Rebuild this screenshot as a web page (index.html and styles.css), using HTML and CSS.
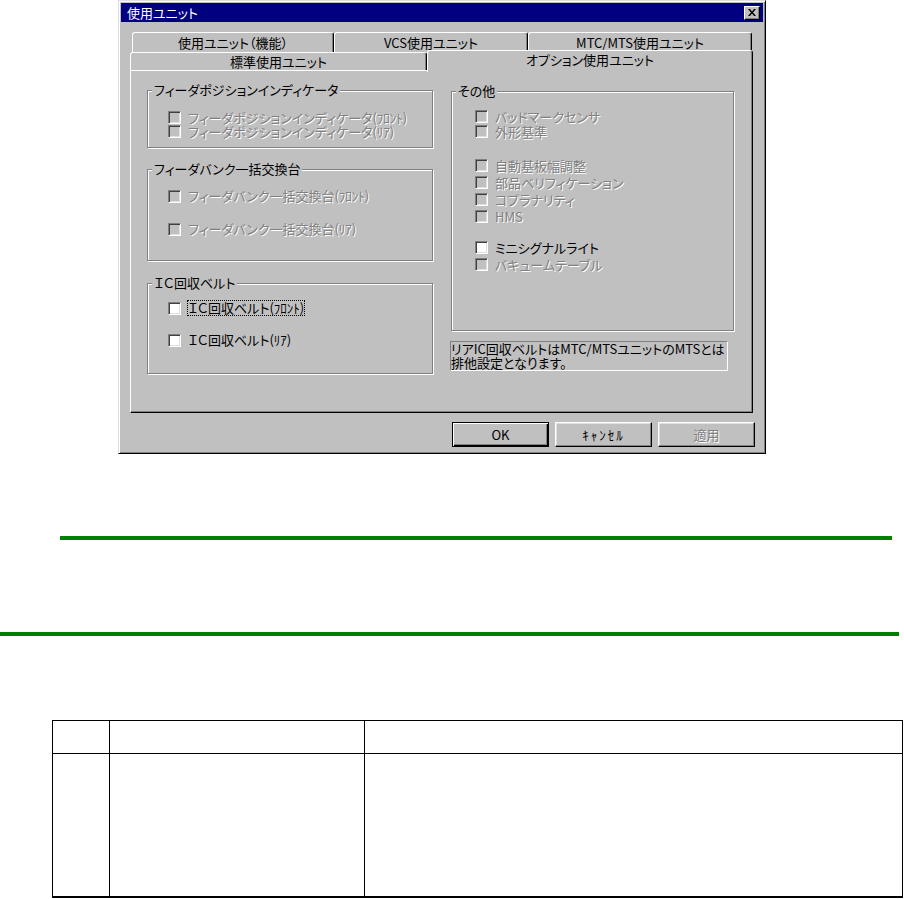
FILE: index.html
```html
<!DOCTYPE html>
<html lang="ja">
<head>
    <meta charset="UTF-8">
    <title>使用ユニット</title>
    <link rel="stylesheet" href="styles.css">
</head>
<body>
    <div class="dialog">
        <div class="titlebar">
            <span class="title">使用ユニット</span>
            <span class="close">
                <svg width="8" height="7" viewBox="0 0 8 7"><path d="M0 0h2l2 2.5L6 0h2L5 3.5 8 7H6L4 4.5 2 7H0l3-3.5z" fill="#000"/></svg>
            </span>
        </div>

        <div class="tabs">
            <div class="tab-row back">
                <div class="tab t-func">使用ユニット（機能）</div>
                <div class="tab t-vcs">VCS使用ユニット</div>
                <div class="tab t-mtc">MTC/MTS使用ユニット</div>
            </div>
            <div class="tab-row front">
                <div class="tab t-std">標準使用ユニット</div>
                <div class="tab t-opt selected">オプション使用ユニット</div>
            </div>
        </div>

        <div class="panel">
            <div class="col">
                <div class="group g-pos">
                    <div class="group-title">フィーダポジションインディケータ</div>
                    <div class="opts">
                        <div class="opt disabled"><span class="cb"></span>フィーダポジションインディケータ(ﾌﾛﾝﾄ)</div>
                        <div class="opt disabled"><span class="cb"></span>フィーダポジションインディケータ(ﾘｱ)</div>
                    </div>
                </div>
                <div class="group g-bank">
                    <div class="group-title">フィーダバンク一括交換台</div>
                    <div class="opts">
                        <div class="opt disabled"><span class="cb"></span>フィーダバンク一括交換台(ﾌﾛﾝﾄ)</div>
                        <div class="opt disabled"><span class="cb"></span>フィーダバンク一括交換台(ﾘｱ)</div>
                    </div>
                </div>
                <div class="group g-belt">
                    <div class="group-title">ＩＣ回収ベルト</div>
                    <div class="opts">
                        <div class="opt"><span class="cb"></span><span class="focus">ＩＣ回収ベルト(ﾌﾛﾝﾄ)</span></div>
                        <div class="opt"><span class="cb"></span>ＩＣ回収ベルト(ﾘｱ)</div>
                    </div>
                </div>
            </div>

            <div class="col">
                <div class="group g-other">
                    <div class="group-title">その他</div>
                    <div class="opts o-first">
                        <div class="opt disabled"><span class="cb"></span>バッドマークセンサ</div>
                        <div class="opt disabled"><span class="cb"></span>外形基準</div>
                    </div>
                    <div class="opts o-mid">
                        <div class="opt disabled"><span class="cb"></span>自動基板幅調整</div>
                        <div class="opt disabled"><span class="cb"></span>部品ベリフィケーション</div>
                        <div class="opt disabled"><span class="cb"></span>コプラナリティ</div>
                        <div class="opt disabled"><span class="cb"></span>HMS</div>
                    </div>
                    <div class="opts o-last">
                        <div class="opt"><span class="cb"></span>ミニシグナルライト</div>
                        <div class="opt disabled"><span class="cb"></span>バキュームテーブル</div>
                    </div>
                </div>
                <div class="note">リアIC回収ベルトはMTC/MTSユニットのMTSとは<br>排他設定となります。</div>
            </div>
        </div>

        <div class="buttons">
            <button class="btn default">OK</button>
            <button class="btn btn-cancel">ｷｬﾝｾﾙ</button>
            <button class="btn" disabled>適用</button>
        </div>
    </div>

    <div class="rule rule-short"></div>
    <div class="rule rule-long"></div>

    <table class="grid">
        <tr class="head">
            <td class="c-no"></td>
            <td class="c-item"></td>
            <td class="c-desc"></td>
        </tr>
        <tr class="body">
            <td></td>
            <td></td>
            <td></td>
        </tr>
    </table>
</body>
</html>
```

FILE: styles.css
```css
body {
    margin: 0;
    background: #fff;
    color: #000;
    font-family: "Noto Sans CJK JP", "Liberation Sans", sans-serif;
    font-size: 13px;
    font-feature-settings: "palt";
}

/* dialog frame */
.dialog {
    box-sizing: border-box;
    width: 648px;
    height: 454px;
    margin-left: 118px;
    padding: 2px;
    background: #c0c0c0;
    border: 1px solid;
    border-color: #dfdfdf #000 #000 #dfdfdf;
    box-shadow: inset 1px 1px 0 #fff, inset -1px -1px 0 #808080;
}
.titlebar {
    display: flex;
    align-items: center;
    height: 19px;
    padding: 0 3px 0 6px;
    background: #000080;
    color: #fff;
    line-height: 19px;
}
.close {
    display: flex;
    align-items: center;
    justify-content: center;
    box-sizing: border-box;
    width: 16px;
    height: 14px;
    margin-left: auto;
    background: #c0c0c0;
    border: 1px solid;
    border-color: #fff #000 #000 #fff;
    box-shadow: inset -1px -1px 0 #808080;
}

/* tabs */
.tabs {
    width: 623px;
    margin: 10px 0 0 9px;
}
.tab-row {
    display: flex;
    align-items: flex-start;
}
.tab-row.back {
    height: 20px;
    padding-left: 2px;
}
.tab-row.front {
    height: 18px;
}
.tab {
    box-sizing: border-box;
    background: #c0c0c0;
    border: 1px solid;
    border-bottom: 0;
    border-color: #fff #000 #000 #fff;
    border-radius: 3px 3px 0 0;
    box-shadow: inset -1px 0 0 #808080;
    text-align: center;
    line-height: 19px;
}
.back .tab {
    height: 20px;
}
.front .tab {
    height: 18px;
    line-height: 16px;
    padding-top: 1px;
}
.t-func { width: 202px; }
.t-vcs { width: 194px; }
.t-mtc { width: 224px; }
.t-std { width: 297px; }
.t-opt { width: 326px; }
.front .tab.selected {
    position: relative;
    height: 22px;
    margin-top: -2px;
    padding-top: 0;
    line-height: 17px;
}

/* tab panel */
.panel {
    box-sizing: border-box;
    display: grid;
    grid-template-columns: 286px 283px;
    column-gap: 18px;
    align-items: start;
    width: 623px;
    height: 343px;
    margin-left: 9px;
    padding-left: 16px;
    border: 1px solid;
    border-color: #fff #000 #000 #fff;
    box-shadow: inset -1px -1px 0 #808080;
}

.group {
    box-sizing: border-box;
    border: 1px solid #808080;
    box-shadow: inset 1px 1px 0 #fff, 1px 1px 0 #fff;
}
.group-title {
    width: fit-content;
    margin: -8px 0 0 4px;
    padding: 0 2px;
    background: #c0c0c0;
    line-height: 14px;
}
.opts {
    display: flex;
    flex-direction: column;
    padding-left: 20px;
}
.opt {
    display: flex;
    align-items: center;
    gap: 7px;
    height: 16px;
    line-height: 14px;
    white-space: nowrap;
}
.cb {
    box-sizing: border-box;
    flex: none;
    width: 13px;
    height: 13px;
    background: #fff;
    border: 1px solid;
    border-color: #808080 #fff #fff #808080;
    box-shadow: inset 1px 1px 0 #404040, inset -1px -1px 0 #dfdfdf;
}
.opt.disabled {
    color: #808080;
    text-shadow: 1px 1px 0 #fff;
}
.opt.disabled .cb {
    background: #c0c0c0;
}
.focus {
    outline: 1px dotted #000;
}

.g-pos {
    height: 58px;
    margin-top: 19px;
}
.g-pos .opts {
    padding-top: 13px;
}
.g-pos .opt {
    height: 14px;
    line-height: 13px;
}
.g-bank {
    height: 92px;
    margin-top: 21px;
}
.g-bank .opts {
    padding-top: 12px;
    gap: 17px;
}
.g-belt {
    height: 91px;
    margin-top: 22px;
}
.g-belt .opts {
    padding-top: 10px;
    gap: 16px;
}

.g-other {
    height: 240px;
    margin-top: 20px;
}
.g-other .opts {
    padding-left: 23px;
}
.o-first {
    padding-top: 11px;
}
.o-first .opt {
    height: 15px;
}
.o-mid {
    margin-top: 18px;
}
.o-mid .opt,
.o-last .opt {
    height: 17px;
}
.o-last {
    margin-top: 14px;
}

.note {
    box-sizing: border-box;
    width: 278px;
    height: 30px;
    margin: 10px 0 0 -1px;
    border: 1px solid;
    border-color: #808080 #fff #fff #808080;
    line-height: 14px;
    white-space: nowrap;
}

/* buttons */
.buttons {
    display: flex;
    justify-content: flex-end;
    gap: 6px;
    margin-top: 9px;
    padding-right: 8px;
}
.btn {
    box-sizing: border-box;
    width: 97px;
    height: 25px;
    padding: 0;
    background: #c0c0c0;
    border: 1px solid;
    border-color: #fff #000 #000 #fff;
    box-shadow: inset -1px -1px 0 #808080, inset 1px 1px 0 #dfdfdf;
    font: inherit;
    color: #000;
}
.btn.default {
    border: 1px solid #000;
    box-shadow: inset 1px 1px 0 #fff, inset -1px -1px 0 #000, inset -2px -2px 0 #808080;
}
.btn-cancel {
    letter-spacing: 2px;
}
.btn:disabled {
    color: #808080;
    text-shadow: 1px 1px 0 #fff;
}

/* page below the screenshot */
.rule {
    height: 4px;
    background: #008000;
}
.rule-short {
    width: 832px;
    margin: 82px 0 0 60px;
}
.rule-long {
    width: 899px;
    margin-top: 92px;
}

.grid {
    width: 851px;
    margin: 84px 0 0 52px;
    border-collapse: collapse;
}
.grid td {
    border: 1px solid #000;
    padding: 0;
}
.grid .head td {
    height: 32px;
}
.grid .body td {
    height: 142px;
    border-bottom-width: 2px;
}
.c-no { width: 56px; }
.c-item { width: 254px; }
```
